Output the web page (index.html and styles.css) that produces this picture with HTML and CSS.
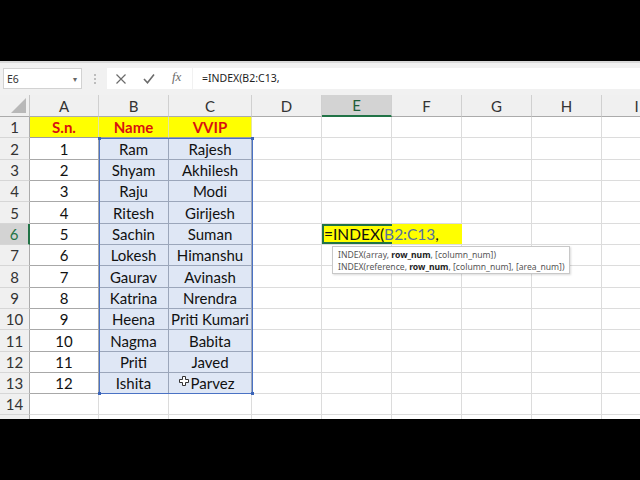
FILE: index.html
```html
<!DOCTYPE html>
<html>
<head>
<meta charset="utf-8">
<link rel="stylesheet" href="styles.css">
</head>
<body>
<div class="top"></div>
<div class="fbar">
  <div class="namebox"><span>E6</span><span class="dd">▾</span></div>
  <div class="grip"><i></i><i></i><i></i></div>
  <div class="fbtns">
    <svg width="85" height="21" viewBox="0 0 85 21">
      <path d="M9.5 6.5 L18.5 15.5 M18.5 6.5 L9.5 15.5" stroke="#6b6b6b" stroke-width="1.2" fill="none"/>
      <path d="M37 11 L40.5 14.8 L47 6.5" stroke="#6b6b6b" stroke-width="1.6" fill="none"/>
    </svg>
    <span class="fx">fx</span>
  </div>
  <div class="finput">=INDEX(B2:C13,</div>
</div>
<div class="sheetwrap">
<div class="sheet">
  <div class="row hdr">
    <div class="corner"><span class="tri"></span></div>
    <div class="ch">A</div><div class="ch">B</div><div class="ch">C</div><div class="ch">D</div><div class="ch sel">E</div><div class="ch">F</div><div class="ch">G</div><div class="ch">H</div><div class="ch">I</div>
  </div>
  <div class="row r21"><div class="rh">1</div><div class="c y">S.n.</div><div class="c y">Name</div><div class="c y">VVIP</div><div class="c"></div><div class="c"></div><div class="c"></div><div class="c"></div><div class="c"></div><div class="c"></div></div>
  <div class="row r22"><div class="rh">2</div><div class="c t">1</div><div class="c b">Ram</div><div class="c b">Rajesh</div><div class="c"></div><div class="c"></div><div class="c"></div><div class="c"></div><div class="c"></div><div class="c"></div></div>
  <div class="row r21"><div class="rh">3</div><div class="c t">2</div><div class="c b">Shyam</div><div class="c b">Akhilesh</div><div class="c"></div><div class="c"></div><div class="c"></div><div class="c"></div><div class="c"></div><div class="c"></div></div>
  <div class="row r21"><div class="rh">4</div><div class="c t">3</div><div class="c b">Raju</div><div class="c b">Modi</div><div class="c"></div><div class="c"></div><div class="c"></div><div class="c"></div><div class="c"></div><div class="c"></div></div>
  <div class="row r22"><div class="rh">5</div><div class="c t">4</div><div class="c b">Ritesh</div><div class="c b">Girijesh</div><div class="c"></div><div class="c"></div><div class="c"></div><div class="c"></div><div class="c"></div><div class="c"></div></div>
  <div class="row r21"><div class="rh sel">6</div><div class="c t">5</div><div class="c b">Sachin</div><div class="c b">Suman</div><div class="c"></div><div class="c"></div><div class="c"></div><div class="c"></div><div class="c"></div><div class="c"></div></div>
  <div class="row r21"><div class="rh">7</div><div class="c t">6</div><div class="c b">Lokesh</div><div class="c b">Himanshu</div><div class="c"></div><div class="c"></div><div class="c"></div><div class="c"></div><div class="c"></div><div class="c"></div></div>
  <div class="row r22"><div class="rh">8</div><div class="c t">7</div><div class="c b">Gaurav</div><div class="c b">Avinash</div><div class="c"></div><div class="c"></div><div class="c"></div><div class="c"></div><div class="c"></div><div class="c"></div></div>
  <div class="row r21"><div class="rh">9</div><div class="c t">8</div><div class="c b">Katrina</div><div class="c b">Nrendra</div><div class="c"></div><div class="c"></div><div class="c"></div><div class="c"></div><div class="c"></div><div class="c"></div></div>
  <div class="row r21"><div class="rh">10</div><div class="c t">9</div><div class="c b">Heena</div><div class="c b">Priti Kumari</div><div class="c"></div><div class="c"></div><div class="c"></div><div class="c"></div><div class="c"></div><div class="c"></div></div>
  <div class="row r22"><div class="rh">11</div><div class="c t">10</div><div class="c b">Nagma</div><div class="c b">Babita</div><div class="c"></div><div class="c"></div><div class="c"></div><div class="c"></div><div class="c"></div><div class="c"></div></div>
  <div class="row r21"><div class="rh">12</div><div class="c t">11</div><div class="c b">Priti</div><div class="c b">Javed</div><div class="c"></div><div class="c"></div><div class="c"></div><div class="c"></div><div class="c"></div><div class="c"></div></div>
  <div class="row r21"><div class="rh">13</div><div class="c t">12</div><div class="c b">Ishita</div><div class="c b pv">Parvez</div><div class="c"></div><div class="c"></div><div class="c"></div><div class="c"></div><div class="c"></div><div class="c"></div></div>
  <div class="row r21"><div class="rh">14</div><div class="c"></div><div class="c"></div><div class="c"></div><div class="c"></div><div class="c"></div><div class="c"></div><div class="c"></div><div class="c"></div><div class="c"></div></div>
  <div class="row r21"><div class="rh"></div><div class="c"></div><div class="c"></div><div class="c"></div><div class="c"></div><div class="c"></div><div class="c"></div><div class="c"></div><div class="c"></div><div class="c"></div></div>

  <div class="range"><i class="h tl"></i><i class="h tr"></i><i class="h bl"></i><i class="h br"></i></div>
  <div class="edit"><span class="eq">=INDEX(</span><span class="ref">B2:C13</span><span class="eq">,</span></div>

  <div class="tip">
    <div>INDEX(array, <b>row_num</b>, [column_num])</div>
    <div>INDEX(reference, <b>row_num</b>, [column_num], [area_num])</div>
  </div>
  <svg class="cursor" width="10" height="10" viewBox="0 0 10 10">
    <path d="M3.5 0.5 H6.5 V3.5 H9.5 V6.5 H6.5 V9.5 H3.5 V6.5 H0.5 V3.5 H3.5 Z" fill="#fff" stroke="#333" stroke-width="1"/>
  </svg>
</div>
</div>
<div class="bottom"></div>
</body>
</html>
```
FILE: styles.css
```css
html, body {
  margin: 0;
  padding: 0;
  background: #000;
}
body {
  width: 640px;
  height: 480px;
  overflow: hidden;
  font-family: Lato, "Noto Sans", sans-serif;
}
.top {
  height: 61px;
  background: #000;
}
.fbar {
  height: 34px;
  box-sizing: border-box;
  background: #f1f1f1;
  border-top: 2px solid #d9d9d9;
  padding-top: 5px;
  display: flex;
  align-items: flex-start;
}
.namebox {
  margin-left: 3px;
  width: 79px;
  height: 21px;
  box-sizing: border-box;
  background: #fff;
  border: 1px solid #d2d2d2;
  display: flex;
  align-items: center;
  justify-content: space-between;
  padding: 0 4px 0 3px;
  font-family: "Noto Sans", sans-serif;
  font-size: 10.5px;
  color: #333;
}
.namebox .dd {
  font-size: 8px;
  color: #666;
}
.grip {
  width: 25px;
  height: 21px;
  display: flex;
  flex-direction: column;
  align-items: center;
  justify-content: center;
  gap: 2px;
}
.grip i {
  width: 2px;
  height: 2px;
  background: #bdbdbd;
}
.fbtns {
  width: 85px;
  height: 21px;
  background: #fff;
  position: relative;
  display: flex;
}
.fbtns .fx {
  position: absolute;
  left: 65px;
  top: 1px;
  font-family: "Liberation Serif", serif;
  font-style: italic;
  font-size: 13px;
  color: #6b6b6b;
}
.finput {
  flex: 1;
  height: 21px;
  margin-left: 1px;
  background: #fff;
  padding-left: 9px;
  font-family: "Noto Sans", sans-serif;
  font-size: 10.5px;
  line-height: 21px;
  color: #222;
}
.sheetwrap {
  width: 640px;
  height: 324px;
  overflow: hidden;
  background: #fff;
}
.sheet {
  position: relative;
  width: 672px;
}
.row {
  display: grid;
  grid-template-columns: 30px 69px 70px 83px 70px 70px 70px 70px 70px 70px;
}
.row.hdr { height: 22px; }
.row.r21 { height: 21px; }
.row.r22 { height: 22px; }
.corner {
  background: #f0f0f0;
  border-right: 1px solid #c6c6c6;
  border-bottom: 1px solid #ababab;
  position: relative;
}
.corner .tri {
  position: absolute;
  right: 3px;
  bottom: 3px;
  width: 0;
  height: 0;
  border-left: 15px solid transparent;
  border-bottom: 15px solid #b8b8b8;
}
.ch {
  background: #f0f0f0;
  border-right: 1px solid #d0d0d0;
  border-bottom: 1px solid #ababab;
  display: flex;
  align-items: center;
  justify-content: center;
  font-size: 15px;
  color: #333;
}
.ch.sel {
  background: #d3d3d3;
  border-bottom: 2px solid #217346;
  color: #1f5e3a;
}
.rh {
  background: #f0f0f0;
  border-right: 1px solid #ababab;
  border-bottom: 1px solid #d6d6d6;
  display: flex;
  align-items: center;
  justify-content: center;
  font-size: 15px;
  color: #333;
}
.rh.sel {
  background: #d3d3d3;
  border-right: 2px solid #217346;
  color: #217346;
}
.c {
  background: #fff;
  border-right: 1px solid #dcdcdc;
  border-bottom: 1px solid #dcdcdc;
  display: flex;
  align-items: center;
  justify-content: center;
  font-size: 15px;
  color: #111;
  white-space: nowrap;
}
.c.y {
  background: #ffff00;
  color: #d81010;
  font-weight: bold;
  border-right-color: #e4e4a0;
  border-bottom-color: #9c9c9c;
}
.c.t {
  border-bottom-color: #a8a8a8;
  border-right-color: #a8a8a8;
}
.c.b {
  background: #dfe7f5;
  border-bottom-color: #9ba6ba;
  border-right-color: #9ba6ba;
}
.c.pv {
  padding-left: 5px;
}
.range {
  position: absolute;
  left: 99px;
  top: 43px;
  width: 154px;
  height: 256px;
  box-sizing: border-box;
  border: 1px solid #4a72c4;
  pointer-events: none;
}
.range .h {
  position: absolute;
  width: 3px;
  height: 3px;
  background: #3b64b8;
}
.range .tl { left: -2px; top: -2px; }
.range .tr { right: -2px; top: -2px; }
.range .bl { left: -2px; bottom: -2px; }
.range .br { right: -2px; bottom: -2px; }
.edit {
  position: absolute;
  left: 322px;
  top: 129px;
  width: 140px;
  height: 20px;
  box-sizing: border-box;
  background: #ffff00;
  display: flex;
  align-items: center;
  padding-left: 2px;
  font-size: 15.5px;
  white-space: nowrap;
}
.edit::before {
  content: "";
  position: absolute;
  left: 0;
  top: 0;
  width: 70px;
  height: 100%;
  box-sizing: border-box;
  border: 2px solid #217346;
  border-right: none;
}
.edit .eq { color: #111; }
.edit .ref { color: #56709e; }
.tip {
  position: absolute;
  left: 332px;
  top: 151px;
  width: 238px;
  height: 28px;
  box-sizing: border-box;
  background: #fff;
  border: 1px solid #c8c8c8;
  box-shadow: 1px 1px 2px rgba(0,0,0,0.15);
  padding: 2px 0 0 5px;
  font-family: "Noto Sans", sans-serif;
  font-size: 8.6px;
  line-height: 12px;
  color: #555;
  white-space: nowrap;
}
.tip b { color: #222; }
.cursor {
  position: absolute;
  left: 179px;
  top: 281px;
}
.bottom {
  height: 61px;
  background: #000;
}
```
